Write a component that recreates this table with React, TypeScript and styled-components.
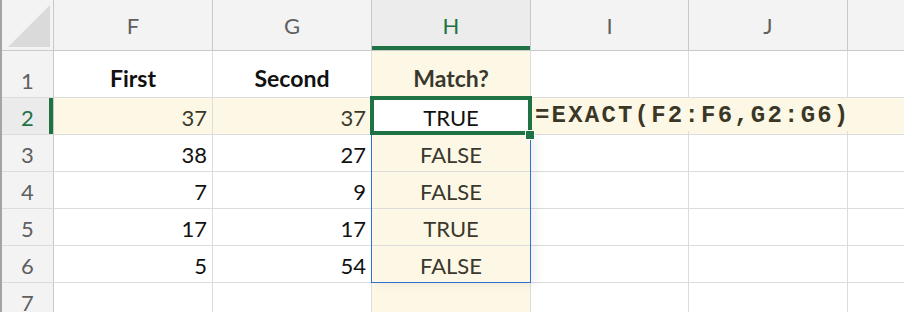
import React from "react";
import styled, { createGlobalStyle, css } from "styled-components";

const GlobalStyle = createGlobalStyle`
  html, body {
    margin: 0;
    padding: 0;
    background: #ffffff;
  }
  body {
    font-family: Lato, "Open Sans", sans-serif;
  }
`;

const GREEN = "#1f7244";
const BLUE = "#2f6fd6";
const FOCUS = "#fdf8e6";
const GRID = "#dcdcdc";
const HEAD_LINE = "#c9c9c9";

const COL_WIDTHS = [159, 159, 159, 158, 159, 159];
// The last column only peeks in at the right edge, so its letter sits off screen.
const COL_NAMES = ["F", "G", "H", "I", "J", ""];
const ROW_HEIGHTS = [47, 37, 37, 37, 37, 37, 37];
const ACTIVE_COL = 2;
const ACTIVE_ROW = 1;

type CellValue = { text: string; kind: "head" | "num" | "bool" } | null;

const DATA: CellValue[][] = [
  [
    { text: "First", kind: "head" },
    { text: "Second", kind: "head" },
    { text: "Match?", kind: "head" },
  ],
  [{ text: "37", kind: "num" }, { text: "37", kind: "num" }, { text: "TRUE", kind: "bool" }],
  [{ text: "38", kind: "num" }, { text: "27", kind: "num" }, { text: "FALSE", kind: "bool" }],
  [{ text: "7", kind: "num" }, { text: "9", kind: "num" }, { text: "FALSE", kind: "bool" }],
  [{ text: "17", kind: "num" }, { text: "17", kind: "num" }, { text: "TRUE", kind: "bool" }],
  [{ text: "5", kind: "num" }, { text: "54", kind: "num" }, { text: "FALSE", kind: "bool" }],
  [],
];

const Window = styled.div`
  width: 904px;
  height: 312px;
  overflow: hidden;
  position: relative;
  box-sizing: border-box;
  border-left: 2px solid #a4a4a4;
`;

const Sheet = styled.div`
  display: grid;
  grid-template-columns: 52px ${COL_WIDTHS.map((w) => `${w}px`).join(" ")};
  grid-template-rows: 51px ${ROW_HEIGHTS.map((h) => `${h}px`).join(" ")};
  position: relative;
`;

const Corner = styled.div`
  background: #f3f3f3;
  border-right: 1px solid ${HEAD_LINE};
  border-bottom: 1px solid ${HEAD_LINE};
  box-sizing: border-box;
  display: flex;
  align-items: flex-end;
  justify-content: flex-end;
  padding: 0 3px 3px 0;
`;

const CornerTriangle = styled.svg`
  width: 42px;
  height: 42px;
  display: block;
`;

const ColHeader = styled.div<{ $active?: boolean }>`
  background: ${(p) => (p.$active ? "#ececec" : "#f3f3f3")};
  border-right: 1px solid ${HEAD_LINE};
  border-bottom: 1px solid ${HEAD_LINE};
  box-sizing: border-box;
  display: flex;
  align-items: center;
  justify-content: center;
  font-size: 22px;
  color: ${(p) => (p.$active ? GREEN : "#5f5f5f")};
  ${(p) =>
    p.$active &&
    css`
      box-shadow: inset 0 -4px 0 ${GREEN};
    `}
`;

const RowHeader = styled.div<{ $active?: boolean }>`
  background: ${(p) => (p.$active ? "#ebebeb" : "#f3f3f3")};
  border-right: 1px solid ${HEAD_LINE};
  border-bottom: 1px solid ${GRID};
  box-sizing: border-box;
  display: flex;
  align-items: flex-end;
  justify-content: center;
  padding-bottom: 5px;
  line-height: 1;
  font-size: 22px;
  color: ${(p) => (p.$active ? GREEN : "#5f5f5f")};
  ${(p) =>
    p.$active &&
    css`
      box-shadow: inset -4px 0 0 ${GREEN};
    `}
`;

const Cell = styled.div<{
  $align: "left" | "right" | "center";
  $bold?: boolean;
  $focus?: boolean;
  $active?: boolean;
  $tall?: boolean;
}>`
  box-sizing: border-box;
  border-right: 1px solid ${GRID};
  border-bottom: 1px solid ${GRID};
  background: ${(p) => (p.$active ? "#ffffff" : p.$focus ? FOCUS : "#ffffff")};
  display: flex;
  align-items: flex-end;
  justify-content: ${(p) =>
    p.$align === "right" ? "flex-end" : p.$align === "center" ? "center" : "flex-start"};
  padding: 0 5px ${(p) => (p.$tall ? "7px" : "5px")} 5px;
  line-height: 1;
  font-size: ${(p) => (p.$bold ? "23px" : "22px")};
  font-weight: ${(p) => (p.$bold ? 700 : 400)};
  color: ${(p) => (p.$active ? "#111111" : p.$focus ? "#3a382c" : "#111111")};
  white-space: nowrap;
  overflow: visible;
`;

const FormulaNote = styled.span`
  position: relative;
  z-index: 2;
  font-family: "Liberation Mono", "Courier New", monospace;
  font-weight: 700;
  font-size: 24px;
  letter-spacing: 2.2px;
  color: #3b3726;
  background: ${FOCUS};
  padding: 6px 6px 3px 2px;
  margin-left: -3px;
  margin-bottom: -2px;
`;

const RangeOutline = styled.div`
  position: absolute;
  box-sizing: border-box;
  border: 1.5px solid ${BLUE};
  box-shadow: 6px 2px 10px rgba(0, 0, 0, 0.06);
  pointer-events: none;
  z-index: 3;
`;

const ActiveOutline = styled.div`
  position: absolute;
  box-sizing: border-box;
  border: 4px solid ${GREEN};
  pointer-events: none;
  z-index: 4;
`;

const FillHandle = styled.div`
  position: absolute;
  width: 8px;
  height: 8px;
  background: ${GREEN};
  border: 1px solid #ffffff;
  z-index: 5;
`;

export default function App() {
  const colLeft = (i: number) => 52 + COL_WIDTHS.slice(0, i).reduce((a, b) => a + b, 0);
  const rowTop = (i: number) => 51 + ROW_HEIGHTS.slice(0, i).reduce((a, b) => a + b, 0);

  const hLeft = colLeft(ACTIVE_COL);
  const hWidth = COL_WIDTHS[ACTIVE_COL];
  const activeTop = rowTop(ACTIVE_ROW);
  const activeBottom = rowTop(ACTIVE_ROW + 1);
  const rangeBottom = rowTop(6);

  return (
    <>
      <GlobalStyle />
      <Window>
        <Sheet>
          <Corner>
            <CornerTriangle viewBox="0 0 42 42">
              <polygon points="42,0 42,42 0,42" fill="#dadada" />
            </CornerTriangle>
          </Corner>
          {COL_NAMES.map((name, c) => (
            <ColHeader key={c} $active={c === ACTIVE_COL}>
              {name}
            </ColHeader>
          ))}
          {ROW_HEIGHTS.map((_, r) => (
            <React.Fragment key={r}>
              <RowHeader $active={r === ACTIVE_ROW}>{r + 1}</RowHeader>
              {COL_NAMES.map((_, c) => {
                const v = DATA[r][c] ?? null;
                const focus = r === ACTIVE_ROW || c === ACTIVE_COL;
                const active = r === ACTIVE_ROW && c === ACTIVE_COL;
                const align = v?.kind === "num" ? "right" : v ? "center" : "left";
                return (
                  <Cell
                    key={c}
                    $align={align}
                    $bold={v?.kind === "head"}
                    $focus={focus}
                    $active={active}
                    $tall={r === 0}
                  >
                    {v?.text}
                    {r === ACTIVE_ROW && c === ACTIVE_COL + 1 && (
                      <FormulaNote>=EXACT(F2:F6,G2:G6)</FormulaNote>
                    )}
                  </Cell>
                );
              })}
            </React.Fragment>
          ))}
        </Sheet>
        <RangeOutline
          style={{
            left: hLeft - 1,
            top: activeBottom - 2,
            width: hWidth + 1,
            height: rangeBottom - activeBottom + 2,
          }}
        />
        <ActiveOutline
          style={{
            left: hLeft - 2,
            top: activeTop - 2,
            width: hWidth + 3,
            height: activeBottom - activeTop + 2,
          }}
        />
        <FillHandle style={{ left: hLeft + hWidth - 6, top: activeBottom - 5 }} />
      </Window>
    </>
  );
}
